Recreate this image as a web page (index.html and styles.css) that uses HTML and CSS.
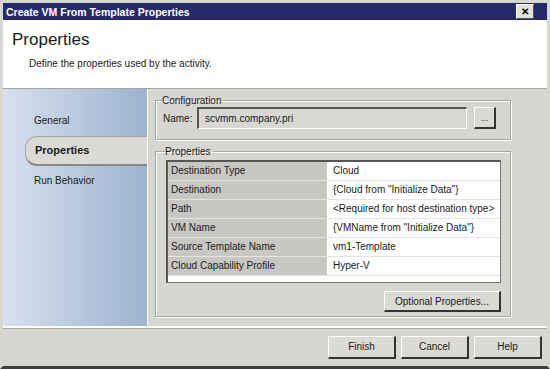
FILE: index.html
```html
<!DOCTYPE html>
<html lang="en">
  <head>
    <meta charset="UTF-8" />
    <meta name="viewport" content="width=device-width, initial-scale=1.0" />
    <title>Create VM From Template Properties</title>
    <link rel="stylesheet" href="styles.css">
  </head>
  <body>
    <div class="window">
      <div class="titlebar">
        <span class="title">Create VM From Template Properties</span>
        <span class="close">&#x2715;</span>
      </div>

      <div class="header">
        <h1>Properties</h1>
        <p>Define the properties used by the activity.</p>
      </div>

      <div class="main">
        <div class="sidebar">
          <div class="nav-item">General</div>
          <div class="nav-item active">Properties</div>
          <div class="nav-item">Run Behavior</div>
        </div>

        <div class="content">
          <fieldset class="group config">
            <legend>Configuration</legend>
            <div class="name-row">
              <label>Name:</label>
              <div class="textbox">scvmm.company.pri</div>
              <div class="btn small">...</div>
            </div>
          </fieldset>

          <fieldset class="group props">
            <legend>Properties</legend>
            <div class="grid">
              <div class="row"><div class="key">Destination Type</div><div class="val">Cloud</div></div>
              <div class="row"><div class="key">Destination</div><div class="val">{Cloud from "Initialize Data"}</div></div>
              <div class="row"><div class="key">Path</div><div class="val">&lt;Required for host destination type&gt;</div></div>
              <div class="row"><div class="key">VM Name</div><div class="val">{VMName from "Initialize Data"}</div></div>
              <div class="row"><div class="key">Source Template Name</div><div class="val">vm1-Template</div></div>
              <div class="row"><div class="key">Cloud Capability Profile</div><div class="val">Hyper-V</div></div>
            </div>
            <div class="opt-row">
              <div class="btn opt">Optional Properties...</div>
            </div>
          </fieldset>
        </div>
      </div>

      <div class="footer">
        <div class="btn">Finish</div>
        <div class="btn">Cancel</div>
        <div class="btn">Help</div>
      </div>
    </div>
  </body>
</html>
```

FILE: styles.css
```css
body {
  margin: 0;
  font-family: "Liberation Sans", Arial, sans-serif;
  font-size: 10px;
  color: #1a1a1a;
  background-color: #d8d6d1;
}
.window {
  width: 550px;
  height: 369px;
  box-sizing: border-box;
  border-left: 3px solid #d8d6d1;
  border-right: 3px solid #d8d6d1;
  border-top: 3px solid #d8d6d1;
  border-bottom: 3px solid #404040;
  display: flex;
  flex-direction: column;
  background-color: #d8d6d1;
  white-space: nowrap;
}
.titlebar {
  height: 17px;
  background-color: #272a6a;
  display: flex;
  align-items: center;
  justify-content: space-between;
  padding: 0 13px 0 3px;
}
.title {
  color: #fff;
  font-weight: bold;
  font-size: 10.5px;
}
.close {
  width: 18px;
  height: 15px;
  background-color: #e4e2de;
  color: #000;
  font-size: 10px;
  font-weight: bold;
  display: flex;
  align-items: center;
  justify-content: center;
  box-sizing: border-box;
  border: 1px solid #fff;
  border-right-color: #555;
  border-bottom-color: #555;
}
.header {
  height: 68px;
  background-color: #fff;
  border-bottom: 1px solid #a8a6a2;
  padding: 0 9px;
}
.header h1 {
  margin: 10px 0 0 0;
  font-weight: normal;
  font-size: 17px;
}
.header p {
  margin: 8px 0 0 17px;
  font-size: 10px;
}
.main {
  display: flex;
  height: 237px;
  border-bottom: 2px solid #fff;
  box-shadow: 0 1px 0 #a8a6a2;
}
.sidebar {
  width: 145px;
  background: linear-gradient(to right, #d7e0ee, #9db3cf);
  padding-top: 17px;
  box-sizing: border-box;
  border-right: 1px solid #fff;
}
.nav-item {
  height: 30px;
  line-height: 30px;
  padding-left: 31px;
}
.nav-item.active {
  margin-left: 22px;
  padding-left: 9px;
  background-color: #dcdad5;
  border-radius: 12px 0 0 12px;
  border: 1px solid #a8a6a2;
  border-right: none;
  border-bottom: 2px solid #8a8884;
  font-weight: bold;
  font-size: 11px;
  height: 27px;
  line-height: 27px;
}
.content {
  flex: 1;
  padding: 6px 0 0 7px;
  width: 360px;
}
.group {
  margin: 0;
  width: 356px;
  box-sizing: border-box;
  border: 1px solid #a8a6a2;
  box-shadow: inset 1px 1px #fff, 1px 1px #fff;
  padding: 0 4px 0 7px;
}
.group legend {
  padding: 0 2px 0 0;
  margin-left: -1px;
}
.config {
  height: 45px;
}
.name-row {
  display: flex;
  align-items: center;
  margin-top: 1px;
}
.name-row label {
  width: 34px;
}
.textbox {
  width: 270px;
  height: 22px;
  line-height: 20px;
  box-sizing: border-box;
  padding-left: 6px;
  border: 2px solid #555;
  border-right: 1px solid #fff;
  border-bottom: 1px solid #fff;
  background-color: #d9d7d3;
}
.btn {
  background-color: #dcdad5;
  border: 1px solid #fff;
  border-right: 2px solid #333;
  border-bottom: 2px solid #333;
  box-sizing: border-box;
  display: flex;
  align-items: center;
  justify-content: center;
}
.btn.small {
  width: 22px;
  height: 22px;
  margin-left: 7px;
  font-size: 9px;
}
.props {
  margin-top: 6px;
  height: 171px;
  padding-left: 10px;
  padding-right: 9px;
}
.grid {
  height: 123px;
  border: 1px solid #777;
  border-left: 2px solid #555;
  border-top: 2px solid #555;
  background-color: #fff;
  box-sizing: border-box;
  margin-top: 3px;
}
.row {
  display: flex;
  height: 18px;
  border-bottom: 1px solid #e6e4e0;
}
.key {
  width: 156px;
  background-color: #c9c7c4;
  padding-left: 3px;
  line-height: 18px;
  border-right: 2px solid #fff;
}
.val {
  flex: 1;
  padding-left: 4px;
  line-height: 18px;
}
.opt-row {
  display: flex;
  justify-content: flex-end;
  margin-top: 8px;
}
.btn.opt {
  width: 117px;
  height: 21px;
}
.footer {
  flex: 1;
  display: flex;
  justify-content: flex-end;
  align-items: center;
  gap: 5px;
  padding-right: 5px;
}
.footer .btn {
  width: 68px;
  height: 23px;
}
```
